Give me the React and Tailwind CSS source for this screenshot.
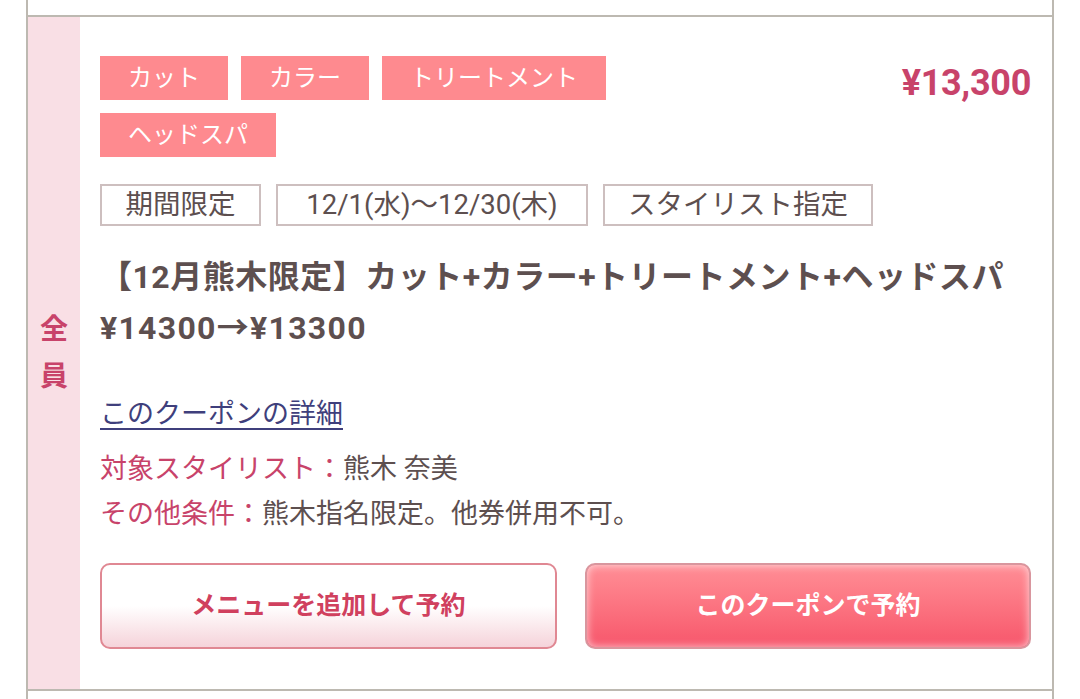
export default function App() {
  const font = { fontFamily: 'Roboto, "Noto Sans CJK JP", sans-serif' };
  const badges = [
    ["期間限定", "w-[161px]"],
    ["12/1(水)〜12/30(木)", "w-[312px]"],
    ["スタイリスト指定", "w-[270px]"],
  ];
  return (
    <div className="w-[1080px] h-[699px] bg-white overflow-hidden" style={font}>
      <div className="ml-[26px] w-[1028px] border-x-2 border-[#bdb9b1]">
        <div className="h-[15px]" />
        <div className="flex border-t-2 border-[#bdb9b1]">
          <div className="w-[52px] bg-[#f9dfe5] flex flex-col items-center justify-center text-[28px] font-bold leading-[47px] text-[#c8436a]">
            <span>全</span>
            <span>員</span>
          </div>
          <div className="flex-1 pl-[20px] pr-[21px] pt-[39px] pb-[40px]">
            <div className="flex justify-between items-start">
              <div className="flex flex-wrap gap-[13px] w-[560px]">
                {["カット", "カラー", "トリートメント", "ヘッドスパ"].map((t) => (
                  <span key={t} className="h-[44px] px-[28px] bg-[#fe8a8f] text-white text-[24px] leading-[44px]">{t}</span>
                ))}
              </div>
              <div className="text-[36px] font-bold text-[#c8436a] leading-[44px] mt-[5px] tracking-[-0.3px]">¥13,300</div>
            </div>
            <div className="flex gap-[15px] mt-[27px]">
              {badges.map(([t, w]) => (
                <span key={t} className={`${w} h-[42px] border-2 border-[#cdbfbf] text-[#5d4f4f] text-[27.5px] leading-[38px] text-center whitespace-nowrap`}>{t}</span>
              ))}
            </div>
            <div className="mt-[26px] text-[32px] font-bold text-[#5d4f4f] leading-[51px] tracking-[0.5px] whitespace-nowrap">
              【12月熊木限定】カット+カラー+トリートメント+ヘッドスパ<br />
              <span className="tracking-[1.3px]">¥14300→¥13300</span>
            </div>
            <div className="mt-[40px] text-[27px] leading-[40px]">
              <a className="text-[#3f3f7c] underline underline-offset-[5px] decoration-[2px]">このクーポンの詳細</a>
            </div>
            <div className="mt-[13px] text-[27px] leading-[45px]">
              <div><span className="text-[#c8436a]">対象スタイリスト：</span><span className="text-[#5d4f4f]">熊木 奈美</span></div>
              <div><span className="text-[#c8436a]">その他条件：</span><span className="text-[#5d4f4f]">熊木指名限定。他券併用不可。</span></div>
            </div>
            <div className="flex justify-between mt-[26px]">
              <button className="w-[457px] h-[86px] rounded-[10px] border-2 border-[#e08893] bg-gradient-to-b from-white via-white to-[#f5d3da] text-[#d0405e] text-[25px] font-bold">
                メニューを追加して予約
              </button>
              <button className="w-[446px] h-[86px] rounded-[10px] border-2 border-[#d9969e] bg-gradient-to-b from-[#ff8e96] to-[#f7556b] text-white text-[25px] font-bold shadow-[inset_0_0_8px_rgba(255,255,255,0.7)]">
                このクーポンで予約
              </button>
            </div>
          </div>
        </div>
        <div className="border-t-2 border-[#bdb9b1] h-[20px]" />
      </div>
    </div>
  );
}
